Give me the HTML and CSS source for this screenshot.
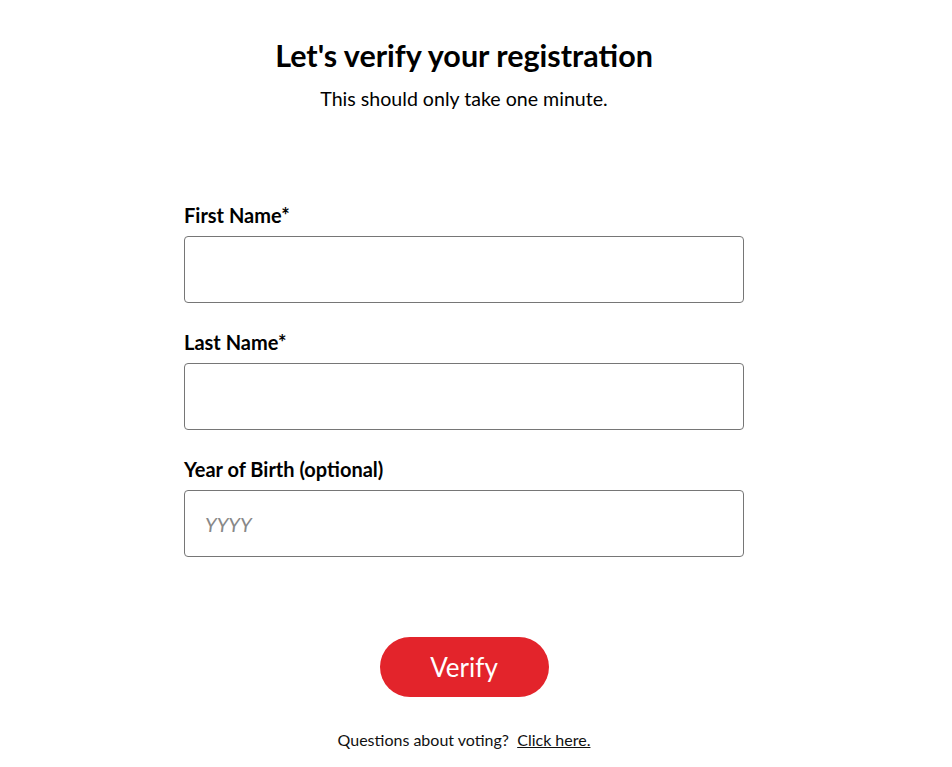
FILE: index.html
```html
<!DOCTYPE html>
<html lang="en">
<head>
<meta charset="utf-8">
<title>Verify registration</title>
<link rel="stylesheet" href="styles.css">
</head>
<body>
<main class="page">
  <header class="intro">
    <h1 class="title">Let's verify your registration</h1>
    <p class="subtitle">This should only take one minute.</p>
  </header>
  <form class="form">
    <div class="field">
      <label class="label" for="first">First Name*</label>
      <input class="input" id="first" type="text">
    </div>
    <div class="field">
      <label class="label" for="last">Last Name*</label>
      <input class="input" id="last" type="text">
    </div>
    <div class="field">
      <label class="label" for="year">Year of Birth (optional)</label>
      <input class="input" id="year" type="text" placeholder="YYYY">
    </div>
    <div class="actions">
      <button class="btn" type="button">Verify</button>
    </div>
  </form>
  <p class="footer">Questions about voting?&nbsp; <a class="link" href="#">Click here.</a></p>
</main>
</body>
</html>
```
FILE: styles.css
```css
* { box-sizing: border-box; }
html, body { margin: 0; padding: 0; background: #fff; }
body { font-family: Lato, "Open Sans", sans-serif; color: #000; }
.page { width: 928px; display: flex; flex-direction: column; align-items: center; padding-top: 36px; }
.intro { text-align: center; }
.title { margin: 0; font-size: 30.5px; font-weight: 700; line-height: 38px; }
.subtitle { margin: 12px 0 0; font-size: 19.6px; line-height: 26px; }
.form { width: 560px; margin-top: 90px; display: flex; flex-direction: column; gap: 26px; }
.field { display: flex; flex-direction: column; gap: 8px; }
.label { font-size: 20px; font-weight: 700; line-height: 26px; }
.input { height: 67px; width: 100%; border: 1px solid #767676; border-radius: 4px; padding: 0 20px; font-family: inherit; font-size: 20px; color: #000; background: #fff; }
.input::placeholder { color: #888; font-style: italic; }
.actions { display: flex; justify-content: center; margin-top: 54px; }
.btn { width: 169px; height: 60px; border: none; border-radius: 30px; background: #e3242b; color: #fff; font-family: inherit; font-size: 26px; cursor: pointer; }
.footer { margin: 33px 0 0; font-size: 16px; color: #111; }
.link { color: #111; }
```
